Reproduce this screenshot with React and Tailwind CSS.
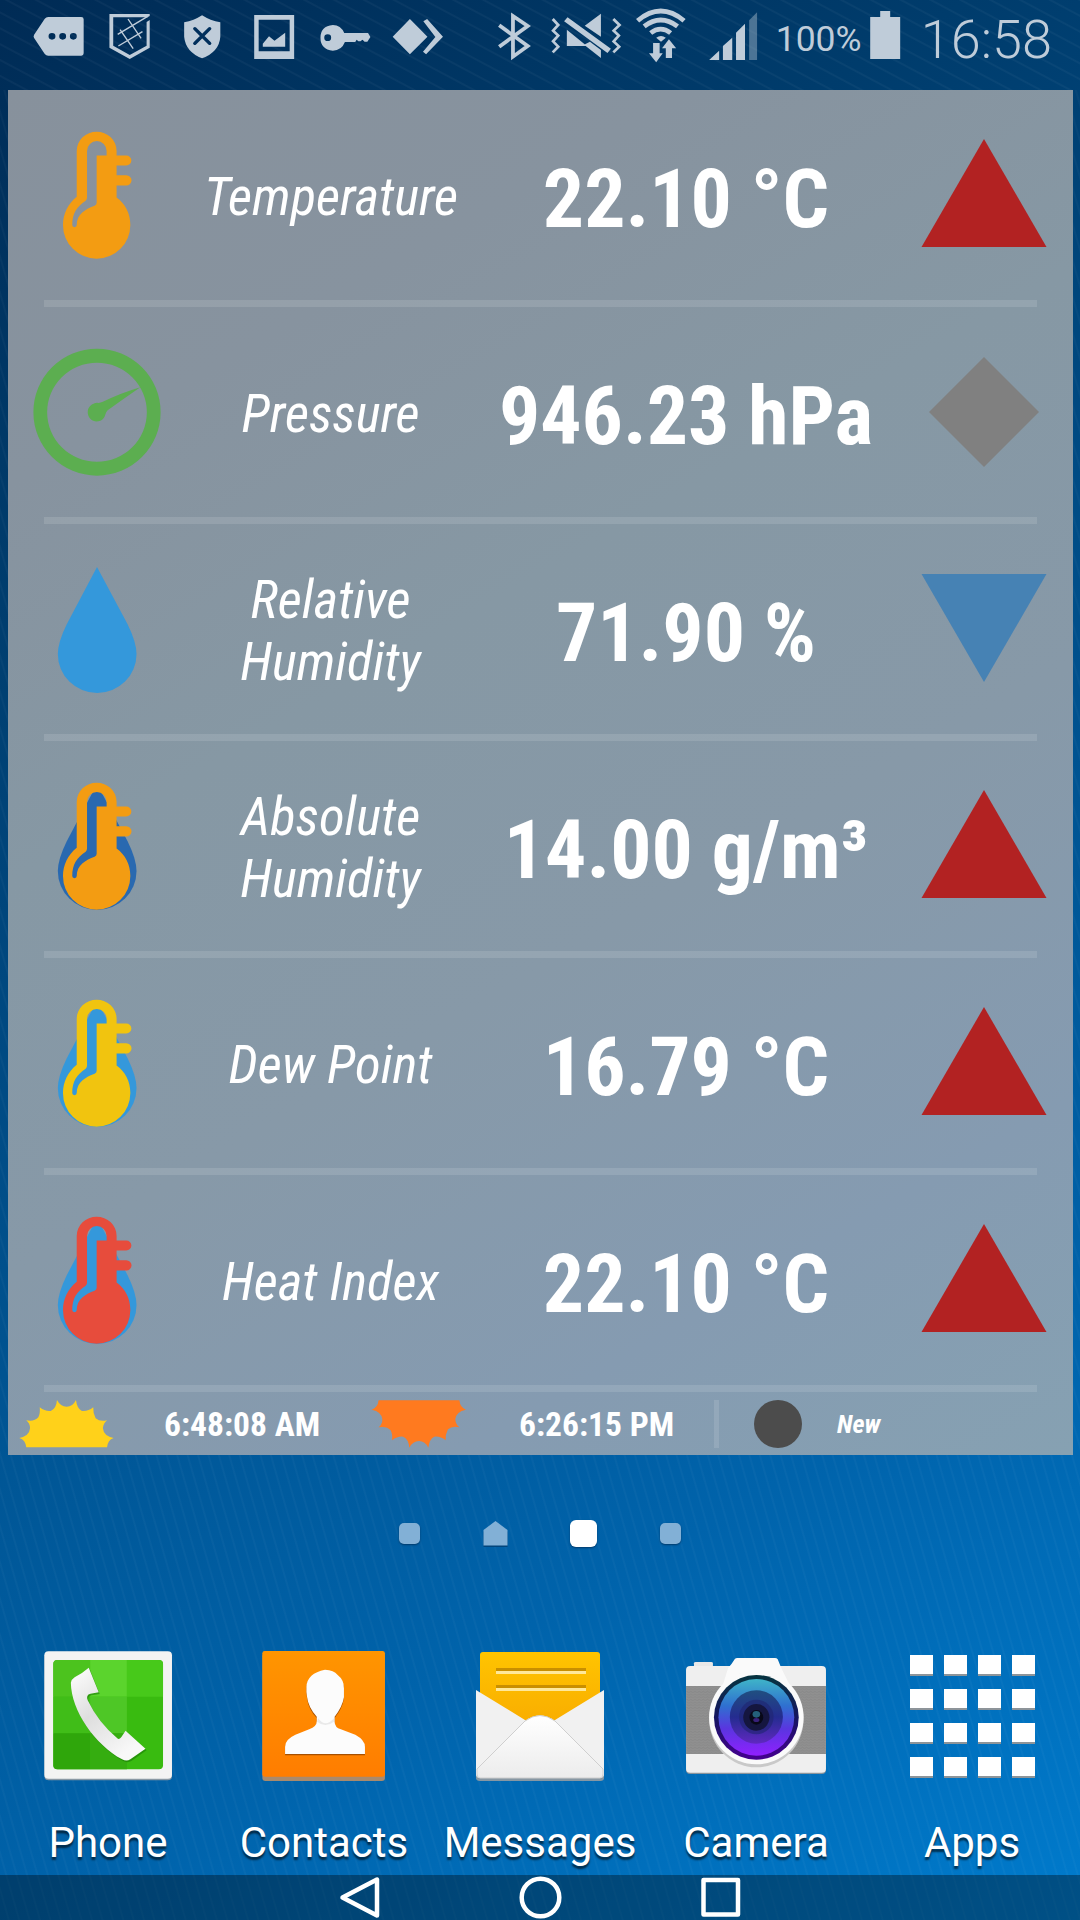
const THERMO =
  "M224 320V182A58 58 0 0 1 340 182V196H368A15 15 0 0 1 368 226H340V255H368A15 15 0 0 1 368 286H340V322C366 342 380 370 380 405A98 101 0 0 1 184 405C184 372 198 342 224 320ZM254 182V322Q254 328 250 332C224 350 211 370 211 405A6 6 0 0 0 224 405C224 372 250 357 276 347Q282 344 282 338V196H311V182A28.5 30 0 0 0 254 182Z";
const DROP = "M283 128L372 300Q398 355 398 390A114.5 117 0 0 1 169 390Q169 355 195 300Z";

function SensorIcon({ thermo, drop, gauge }) {
  return (
    <svg className="h-[133px] w-[132px]" viewBox="91 116 384 400" preserveAspectRatio="none">
      {drop && <path d={DROP} fill={drop} />}
      {thermo && <path d={THERMO} fill={thermo} fillRule="evenodd" />}
      {gauge && (
        <g fill={gauge}>
          <path
            fillRule="evenodd"
            d="M98 315A185 191 0 0 1 468 315A185 191 0 0 1 98 315ZM138 315A145 149 0 0 0 428 315A145 149 0 0 0 138 315Z"
          />
          <path d="M256 315C256 300 268 288 284 287Q292 288 300 284Q350 258 409 240Q360 275 314 309Q308 315 307 323C304 336 294 343 282 343C268 343 256 330 256 315Z" />
        </g>
      )}
    </svg>
  );
}

function Trend({ kind }) {
  return (
    <svg className="h-28 w-[126px]" viewBox="0 0 126 112">
      {kind === "up" && <path d="M63 0L125.5 108H.5Z" fill="#b22222" />}
      {kind === "down" && <path d="M63 109L125.5 1H.5Z" fill="#4682b4" />}
      {kind === "flat" && <path d="M63 1L118 56L63 111L8 56Z" fill="#808080" />}
    </svg>
  );
}

const ROWS = [
  { label: "Temperature", value: "22.10 °C", trend: "up", icon: { thermo: "#f39c12" } },
  { label: "Pressure", value: "946.23 hPa", trend: "flat", icon: { gauge: "#5cae50" } },
  { label: "Relative Humidity", value: "71.90 %", trend: "down", icon: { drop: "#3498db" } },
  { label: "Absolute Humidity", value: "14.00 g/m³", trend: "up", icon: { thermo: "#f39c12", drop: "#2969b0" } },
  { label: "Dew Point", value: "16.79 °C", trend: "up", icon: { thermo: "#f1c40f", drop: "#3498db" } },
  { label: "Heat Index", value: "22.10 °C", trend: "up", icon: { thermo: "#e74c3c", drop: "#3498db" } },
];

function StatusGlyph({ className, x, w, children }) {
  return (
    <svg className={"h-[60px] shrink-0 " + className} viewBox={`${x} 15 ${w} 180`} preserveAspectRatio="none" fill="#bfccd9">
      {children}
    </svg>
  );
}

function StatusBar() {
  return (
    <header className="flex h-[90px] items-start bg-[repeating-linear-gradient(28deg,#ffffff00_0px,#ffffff00_11px,#ffffff09_12px,#ffffff09_13px,#ffffff00_14px)] pt-[5px] pl-[31px] text-[#bfccd9]">
      <StatusGlyph className="w-[65.4px]" x={88} w={190}>
        <path fillRule="evenodd" d="M97 104L128 56Q132 51 138 51H234Q241 51 241 58V160Q241 167 234 167H138Q132 167 128 162L97 114Q94 109 97 104ZM139 109a10 10 0 1 0 20 0a10 10 0 1 0-20 0M170 109a10 10 0 1 0 20 0a10 10 0 1 0-20 0M201 109a10 10 0 1 0 20 0a10 10 0 1 0-20 0" />
      </StatusGlyph>
      <StatusGlyph className="w-[72.3px]" x={280} w={210}>
        <path d="M319 42H436V48L427 53V52H330V137L378 165L427 137V66L436 60V143L378 177L319 143Z" />
        <path d="M343 103L430 49M345 138L415 95M373 57L411 115M350 89L388 146" fill="none" stroke="#bfccd9" strokeWidth="4" />
      </StatusGlyph>
      <StatusGlyph className="w-[68.9px]" x={490} w={200}>
        <path d="M586 46Q610 62 639 67V110Q636 155 586 175Q538 155 534 110V67Q562 62 586 46Z" />
        <path d="M565 86L608 130M608 86L565 130" stroke="#002f5c" strokeWidth="10" strokeLinecap="round" />
      </StatusGlyph>
      <StatusGlyph className="w-[68.9px]" x={691} w={200}>
        <path fillRule="evenodd" d="M738 45H854V177H738ZM751 59V154H841V59ZM763 131L781 109L797 122L828 98V140H763Z" />
      </StatusGlyph>
      <StatusGlyph className="w-[75.8px]" x={890} w={220}>
        <path fillRule="evenodd" d="M968 75Q991 75 1001 99H1070L1077 111L1068 125H1060L1054 119L1048 124H1042L1037 119L1033 126H1003Q993 152 968 152Q932 148 932 113Q932 78 968 75ZM943 113a10 10 0 1 0 20 0a10 10 0 1 0-20 0" />
      </StatusGlyph>
      <StatusGlyph className="w-[99.9px]" x={1110} w={290}>
        <path d="M1141 110L1191 57L1242 110L1191 163ZM1230 64L1241 57L1287 110L1238 163L1229 155L1265 111Z" />
      </StatusGlyph>
      <StatusGlyph className="w-[57.8px]" x={1400} w={168}>
        <path d="M1450 76L1533 138L1490 170V48L1533 78L1450 140" fill="none" stroke="#bfccd9" strokeWidth="11" />
      </StatusGlyph>
      <StatusGlyph className="w-[89.5px]" x={0} w={260}>
        <path d="M78 89L136 138H78ZM177 41V110L130 77ZM70 64L80 52L206 146L196 159ZM128 134L145 125L177 150V174Z" />
        <path d="M37 57L53 75L38 92L53 107L38 124L53 140L37 157M213 57L231 75L214 92L229 107L214 124L230 140L213 157" fill="none" stroke="#bfccd9" strokeWidth="8" />
      </StatusGlyph>
      <StatusGlyph className="w-[65.4px]" x={259} w={190}>
        <path d="M284 62Q351 4 419 62M303 79Q351 41 400 79M322 99Q351 76 380 99" fill="none" stroke="#bfccd9" strokeWidth="14" />
        <path d="M338 113Q352 103 366 113L352 125ZM329 129H348V160H357L338 187L317 160H329ZM366 174V145H355L375 118L396 145H384V174Z" />
      </StatusGlyph>
      <StatusGlyph className="w-[80px]" x={450} w={232}>
        <path d="M491 180L520 152V180ZM531 138L558 113V180H531ZM569 98L595 71V180H569Z" />
        <path d="M607 61L630 37V180H607Z" opacity=".4" />
      </StatusGlyph>
      <span className="w-[88.9px] shrink-0 pt-[14px] pl-px text-[35.5px] leading-[41px] tracking-[-0.1px]">100%</span>
      <StatusGlyph className="w-[51px]" x={940} w={148}>
        <path d="M987 33H1016V51H1045V177H958V51H987Z" />
      </StatusGlyph>
      <span className="shrink-0 pt-[4px] pl-[6px] text-[54px] leading-[62px] font-[350]">16:58</span>
    </header>
  );
}

const SUN =
  "M77 262Q75 240 57 234Q86 228 88 205Q88 190 77 181Q100 186 112 172Q118 160 116 142Q132 155 148 153Q164 146 166 120Q176 140 194 140Q212 140 221 120Q224 146 238 153Q256 155 271 142Q270 160 278 175Q290 186 311 181Q300 190 299 205Q301 228 330 234Q313 240 311 262Z";

function Widget() {
  return (
    <main className="mr-[7px] ml-2 h-[1365px] bg-[linear-gradient(150deg,#87919c_0%,#87939f_20%,#8698a4_40%,#8799a8_60%,#859bb1_82%,#86a1b2_100%)] text-white [font-stretch:75%]">
      {ROWS.map((row) => (
        <section key={row.label}>
          <div className="grid h-[210px] grid-cols-[178px_292px_416px_179px] items-center justify-items-center">
            <SensorIcon {...row.icon} />
            <div className="w-[256px] pt-1 pr-[3px] text-center text-[52.8px] leading-[62px] italic">{row.label}</div>
            <div className="pt-[7px] text-[81.8px] leading-[96px] font-bold whitespace-nowrap">{row.value}</div>
            <Trend kind={row.trend} />
          </div>
          <div className="mr-9 ml-9 h-[7px] bg-white/12" />
        </section>
      ))}
      <footer className="flex h-[63px] items-center pl-[11px] text-[33.5px] leading-[40px] font-bold">
        <svg className="h-12 w-[96px] shrink-0" viewBox="56 120 278 144" preserveAspectRatio="none">
          <path d={SUN} fill="#ffd11a" />
        </svg>
        <span className="w-[256px] shrink-0 pt-[2px] pl-[49px] whitespace-nowrap">6:48:08 AM</span>
        <svg className="h-12 w-[96px] shrink-0 -scale-y-100" viewBox="55 119 278 144" preserveAspectRatio="none">
          <path d={SUN} fill="#ff7a1f" />
        </svg>
        <span className="w-[247px] shrink-0 pt-[2px] pl-[52px] whitespace-nowrap">6:26:15 PM</span>
        <div className="h-12 w-[5px] shrink-0 bg-white/12" />
        <div className="ml-[35px] h-12 w-12 shrink-0 rounded-full bg-[#4c4c4c]" />
        <span className="pl-[35px] text-[26px] leading-[30px] italic">New</span>
      </footer>
    </main>
  );
}

function PhoneIcon() {
  const handset =
    "M257 145L286 219L262 223Q248 226 254 243Q285 310 340 357Q345 362 352 353L364 334L422 388L378 420Q367 427 354 420C275 375 206 275 205 190Q207 180 216 174Q238 162 257 145Z";
  return (
    <svg className="h-[132px] w-[130px]" viewBox="124 92 378 396" preserveAspectRatio="none">
      <defs>
        <linearGradient id="hs" x1="0" y1="0" x2=".6" y2="1">
          <stop offset="0" stopColor="#fff" />
          <stop offset=".5" stopColor="#dedede" />
          <stop offset="1" stopColor="#f8f8f8" />
        </linearGradient>
      </defs>
      <rect x="128" y="100" width="371" height="383" rx="12" fill="#8a98a4" />
      <rect x="128" y="96" width="371" height="382" rx="12" fill="#f3f3f3" />
      <rect x="154" y="122" width="319" height="328" rx="12" fill="#39bb10" />
      <path d="M166 122H261V232H154V134Q154 122 166 122Z" fill="#4cc31e" />
      <path d="M261 122H368V232H261Z" fill="#5bd42d" />
      <path d="M368 122H461Q473 122 473 134V232H368Z" fill="#47c91a" />
      <path d="M154 232H261V342H154Z" fill="#40bd18" />
      <path d="M261 232H368V342H261Z" fill="#4ec726" />
      <path d="M154 342H261V450H166Q154 450 154 438Z" fill="#2fa60b" />
      <path d="M261 342H368V450H261Z" fill="#35ad10" />
      <path d={handset} transform="translate(3 5)" fill="#1b7d05" opacity=".6" />
      <path d={handset} fill="url(#hs)" />
    </svg>
  );
}

function ContactsIcon() {
  const bust =
    "M944 149Q970 151 980 164Q1000 180 999 205V232Q994 262 972 290V305Q972 322 990 328L1032 344Q1060 360 1060 380V402H828V380Q828 358 858 344L898 328Q920 320 920 303V290Q896 264 892 232Q889 215 890 200Q892 160 944 149Z";
  return (
    <svg className="h-[132px] w-[125px]" viewBox="761 90 363 396" preserveAspectRatio="none">
      <defs>
        <linearGradient id="or" x1="0" y1="0" x2="0" y2="1">
          <stop offset="0" stopColor="#ff9500" />
          <stop offset="1" stopColor="#ff7d00" />
        </linearGradient>
      </defs>
      <rect x="762" y="100" width="356" height="383" rx="9" fill="#a98a6c" />
      <rect x="762" y="93" width="356" height="377" rx="7" fill="url(#or)" />
      <path d={bust} fill="#a75000" transform="translate(0 4)" />
      <path d={bust} fill="#fcfcfc" />
      <path d="M924 295Q945 325 970 295V305Q945 325 921 305Z" fill="#e9e9e9" />
    </svg>
  );
}

function MessagesIcon() {
  return (
    <svg className="h-[132px] w-[132px]" viewBox="0 0 132 132">
      <defs>
        <linearGradient id="ye" x1="0" y1="0" x2="0" y2="1">
          <stop offset="0" stopColor="#ffc400" />
          <stop offset="1" stopColor="#f8a800" />
        </linearGradient>
        <linearGradient id="wh" x1="0" y1="0" x2="0" y2="1">
          <stop offset="0" stopColor="#fff" />
          <stop offset="1" stopColor="#ececec" />
        </linearGradient>
      </defs>
      <path d="M2 60H130V128Q130 131 126 131H6Q2 131 2 128Z" fill="#8797a3" />
      <path d="M6 5Q6 2 9 2H123Q126 2 126 5V90H6Z" fill="url(#ye)" />
      <path d="M22 19.5H112M22 36.5H112" stroke="#c98f00" strokeWidth="3" />
      <path d="M22 22.5H112M22 39.5H112" stroke="#ffe89a" strokeWidth="3" />
      <path d="M2 40L51 70L66 80L81 70L130 40V124Q130 128 126 128H6Q2 128 2 124Z" fill="#f1f1f1" />
      <path d="M3 119L51 71Q66 60 81 71L129 119V124Q129 128 126 128H6Q3 128 3 124Z" fill="url(#wh)" stroke="#cfcfcf" strokeWidth="1" />
    </svg>
  );
}

function CameraIcon() {
  return (
    <svg className="h-[120px] w-[142px]" viewBox="421 108 412 360" preserveAspectRatio="none">
      <defs>
        <linearGradient id="lens" x1="0" y1="0" x2="0" y2="1">
          <stop offset="0" stopColor="#3fb4c8" />
          <stop offset=".35" stopColor="#2f70d0" />
          <stop offset=".65" stopColor="#5a35e0" />
          <stop offset="1" stopColor="#9020ff" />
        </linearGradient>
        <linearGradient id="rim" x1="0" y1="0" x2="0" y2="1">
          <stop offset="0" stopColor="#06343f" />
          <stop offset=".5" stopColor="#151560" />
          <stop offset="1" stopColor="#450090" />
        </linearGradient>
        <linearGradient id="mid" x1="0" y1="0" x2="0" y2="1">
          <stop offset="0" stopColor="#204f80" />
          <stop offset=".5" stopColor="#242c90" />
          <stop offset="1" stopColor="#6028c0" />
        </linearGradient>
        <pattern id="grip" width="12" height="8" patternUnits="userSpaceOnUse">
          <path d="M0 0H12V8H0Z" fill="#8a8a8a" />
          <path d="M0 6L6 2L12 6" fill="none" stroke="#979797" strokeWidth="2" />
        </pattern>
      </defs>
      <rect x="424" y="150" width="406" height="312" rx="12" fill="#8a949c" />
      <path d="M447 142V130Q447 126 452 126H497Q502 126 502 130V142Z" fill="#e8e8e8" />
      <rect x="424" y="138" width="406" height="320" rx="12" fill="#efefef" />
      <rect x="424" y="198" width="406" height="204" fill="url(#grip)" />
      <path d="M546 144Q556 134 565 118Q568 114 573 114H682Q687 114 690 118Q698 140 706 156L726 198H530Z" fill="#fafafa" />
      <ellipse cx="628" cy="298" rx="137" ry="144" fill="#c9c9c9" />
      <ellipse cx="628" cy="292" rx="137" ry="141" fill="#fafafa" />
      <ellipse cx="628" cy="292" rx="123" ry="127" fill="url(#rim)" />
      <ellipse cx="628" cy="292" rx="110" ry="115" fill="url(#lens)" />
      <ellipse cx="628" cy="291" rx="77" ry="80" fill="url(#mid)" />
      <ellipse cx="628" cy="291" rx="50" ry="52" fill="#20256f" opacity=".6" />
      <ellipse cx="628" cy="292" rx="38" ry="40" fill="#15163f" />
      <ellipse cx="628" cy="292" rx="20" ry="22" fill="#080818" />
      <ellipse cx="628" cy="283" rx="11" ry="10" fill="#24607a" />
      <ellipse cx="628" cy="300" rx="9" ry="6" fill="#38207a" />
    </svg>
  );
}

function AppsIcon() {
  return (
    <div className="grid grid-cols-[repeat(4,23px)] gap-x-[11px] gap-y-[13px]">
      {Array.from({ length: 16 }, (_, i) => (
        <span key={i} className="h-[21px] border-b-2 border-[#8d9499] bg-white" />
      ))}
    </div>
  );
}

const DOCK = [
  ["Phone", PhoneIcon],
  ["Contacts", ContactsIcon],
  ["Messages", MessagesIcon],
  ["Camera", CameraIcon],
  ["Apps", AppsIcon],
];

function Pager() {
  return (
    <div className="flex h-[27px] items-center justify-center gap-[62.5px]">
      <span className="h-[21px] w-[21px] rounded-[5px] bg-[#82b0d6] shadow-[0_1px_2px_#003a6a]" />
      <svg className="h-[27px] w-[25px]" viewBox="0 0 25 27">
        <path d="M12.5 3L24.5 12V27H.5V12Z" fill="#00457d" />
        <path d="M12.5 1L24.5 10V25.5H.5V10Z" fill="#82b0d6" />
      </svg>
      <span className="h-[27px] w-[27px] rounded-[6px] bg-white shadow-[0_1px_2px_#003a6a]" />
      <span className="h-[21px] w-[21px] rounded-[5px] bg-[#82b0d6] shadow-[0_1px_2px_#003a6a]" />
    </div>
  );
}

function NavBar() {
  return (
    <nav className="flex h-[45px] items-center justify-center gap-[138px] bg-black/35">
      <svg className="h-[43px] w-[42px]" viewBox="0 0 42 43" fill="none" stroke="#fff" strokeWidth="4.5" strokeLinejoin="round">
        <path d="M38 3.500V39.500L3.500 21.500Z" />
      </svg>
      <svg className="h-[43px] w-[43px]" viewBox="0 0 43 43" fill="none" stroke="#fff" strokeWidth="4.500">
        <circle cx="21.500" cy="21.500" r="18.800" />
      </svg>
      <svg className="h-[43px] w-[42px]" viewBox="0 0 42 43" fill="none" stroke="#fff" strokeWidth="4.500" strokeLinejoin="round">
        <path d="M3.500 4H38V38.500H3.500Z" />
      </svg>
    </nav>
  );
}

export default function App() {
  return (
    <div className="flex h-[1920px] w-[1080px] flex-col overflow-hidden bg-[linear-gradient(150deg,#002b55_0%,#003c6c_22%,#00508c_50%,#0063ab_76%,#007bcd_100%)] font-[Roboto,sans-serif]">
      <StatusBar />
      <div className="flex grow flex-col bg-[repeating-linear-gradient(74deg,#ffffff00_0px,#ffffff00_7px,#ffffff07_8px,#ffffff07_9px,#ffffff00_10px)]">
        <Widget />
        <div className="h-[65px]" />
        <Pager />
        <div className="mt-[102px] grid h-[226px] grid-cols-5">
          {DOCK.map(([name, Icon]) => (
            <div key={name} className="flex flex-col items-center">
              <div className="flex h-[134px] items-center justify-center">
                <Icon />
              </div>
              <span className="pt-[35px] text-[42px] leading-[49px] text-white [text-shadow:0_3px_2px_#00000099]">{name}</span>
            </div>
          ))}
        </div>
        <NavBar />
      </div>
    </div>
  );
}
